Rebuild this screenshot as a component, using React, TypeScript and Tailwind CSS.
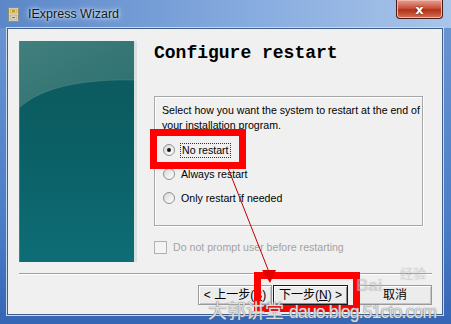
import React from "react";

const ui = { fontFamily: '"Liberation Sans", Arial, sans-serif' };
const cjk = { fontFamily: '"Liberation Sans", "Noto Sans CJK SC", sans-serif' };

function CabinetIcon() {
  return (
    <svg width="11" height="15" viewBox="0 0 11 15">
      <rect x="0.5" y="0.5" width="10" height="14" rx="1" fill="#e9e4cf" stroke="#8d8a78" />
      <rect x="2" y="2" width="7" height="4" fill="#f4d36a" stroke="#b08f2c" strokeWidth="0.6" />
      <rect x="2" y="8" width="7" height="5" fill="#d8d3c0" stroke="#9b9783" strokeWidth="0.6" />
      <rect x="4" y="3.5" width="3" height="1" fill="#7a5e10" />
      <rect x="4" y="10" width="3" height="1" fill="#77735f" />
    </svg>
  );
}

function TealPanel() {
  return (
    <svg width="118" height="221" viewBox="0 0 118 221" className="block">
      <defs>
        <linearGradient id="top" x1="0" y1="0" x2="1" y2="1">
          <stop offset="0" stopColor="#417f7c" />
          <stop offset="1" stopColor="#2b6f70" />
        </linearGradient>
        <linearGradient id="body" x1="0" y1="0" x2="0" y2="1">
          <stop offset="0" stopColor="#0b585d" />
          <stop offset="0.5" stopColor="#0b6065" />
          <stop offset="1" stopColor="#0e6d76" />
        </linearGradient>
      </defs>
      <rect x="0" y="0" width="116" height="221" fill="url(#body)" />
      <path d="M0 0 H116 V39 C70 38 25 44 0 67 Z" fill="url(#top)" />
      <path d="M0 67 C25 44 70 38 116 39" fill="none" stroke="#4f8c89" strokeWidth="0.8" opacity="0.6" />
      <rect x="0" y="0" width="1" height="221" fill="#5c8f8e" opacity="0.6" />
      <rect x="115" y="0" width="3" height="221" fill="#d9e0e0" />
    </svg>
  );
}

function Radio({ checked }: { checked?: boolean }) {
  return (
    <span className="flex h-[12px] w-[12px] items-center justify-center rounded-full border border-[#8f9193] bg-[linear-gradient(135deg,#d8d8d8,#ffffff)]">
      {checked && <span className="h-[4px] w-[4px] rounded-full bg-[#141414]" />}
    </span>
  );
}

function Button({ children, primary }: { children: React.ReactNode; primary?: boolean }) {
  return (
    <div
      className={`flex h-[20px] items-center justify-center bg-[#ececec] text-[12px] text-black ${
        primary
          ? "border border-[#1a1a1a] shadow-[inset_1px_1px_0_#fff,inset_-1px_-1px_0_#8c8c8c]"
          : "border border-[#9a9a9a] shadow-[inset_1px_1px_0_#fff,inset_-1px_-1px_0_#c4c4c4]"
      }`}
      style={cjk}
    >
      {children}
    </div>
  );
}

export default function App() {
  return (
    <div className="relative h-[324px] w-[451px] overflow-hidden bg-[linear-gradient(180deg,#6d97d3,#4a7cc6_70%,#3565b5)]" style={ui}>
      {/* Title bar */}
      <div className="flex h-[28px] items-center bg-[linear-gradient(90deg,#5b87c8,#86abdf_55%,#a9c5e9)] pl-[8px]">
        <CabinetIcon />
        <span
          className="ml-[9px] text-[12.5px] text-[#101820] [text-shadow:0_0_6px_#e6eefa,0_0_3px_#e6eefa]"
          style={ui}
        >
          IExpress Wizard
        </span>
        <div className="ml-auto mr-[8px] flex h-[19px] w-[47px] self-start items-center justify-center rounded-b-[4px] border border-t-0 border-[#4b1a14] bg-[linear-gradient(180deg,#e7a193,#c8523c_45%,#b33016_55%,#d3735a)] shadow-[inset_0_0_0_1px_#f0b8a8]">
          <span className="text-[13px] font-bold leading-none text-white [text-shadow:0_0_2px_#5a1409]" style={{ fontFamily: '"DejaVu Sans", sans-serif' }}>
            x
          </span>
        </div>
      </div>

      {/* Client area */}
      <div className="ml-[7px] mr-[8px] flex h-[287px] flex-col border border-[#3f5f88] bg-[#f0f0f0] shadow-[0_0_0_1px_#c9daf0]">
        <div className="flex pl-[11px] pt-[12px]">
          <TealPanel />
          <div className="ml-[17px] flex w-[269px] flex-col">
            <h1
              className="mt-[1px] text-[18px] font-bold leading-[22px] text-black"
              style={{ fontFamily: '"Liberation Mono", "Courier New", monospace' }}
            >
              Configure restart
            </h1>
            <div className="mt-[32px] h-[130px] border border-[#a6a6a6] pl-[7px] pt-[6px] shadow-[inset_1px_1px_0_#fff,1px_1px_0_#fff]">
              <p className="whitespace-nowrap text-[10.6px] leading-[15px] text-black">
                Select how you want the system to restart at the end of
                <br />
                your installation program.
              </p>
              <div className="mt-[9px] flex flex-col gap-[8px] pl-[1px] text-[10.6px] text-black">
                <div className="flex h-[16px] items-center">
                  <Radio checked />
                  <span className="ml-[5px] border border-dotted border-[#333] px-[1px] leading-[13px]">No restart</span>
                </div>
                <div className="flex h-[16px] items-center">
                  <Radio />
                  <span className="ml-[6px] leading-[13px]">Always restart</span>
                </div>
                <div className="flex h-[16px] items-center">
                  <Radio />
                  <span className="ml-[6px] leading-[13px]">Only restart if needed</span>
                </div>
              </div>
            </div>
            <div className="mt-[14px] flex items-center">
              <span className="h-[13px] w-[13px] border border-[#b1b1b1] bg-[#f4f4f4]" />
              <span className="ml-[6px] text-[10.6px] text-[#a3a3a3]">Do not prompt user before restarting</span>
            </div>
          </div>
        </div>

        {/* Separator */}
        <div className="ml-[11px] mt-[11px] w-[413px] border-t border-b border-t-[#a0a0a0] border-b-white" />

        {/* Buttons */}
        <div className="mt-[10px] flex justify-end pr-[10px]">
          <div className="w-[74px]">
            <Button>
              <span>&lt; 上一步(<span className="underline">B</span>)</span>
            </Button>
          </div>
          <div className="ml-[1px] w-[75px]">
            <Button primary>
              <span>下一步(<span className="underline">N</span>) &gt;</span>
            </Button>
          </div>
          <div className="ml-[10px] w-[74px]">
            <Button>取消</Button>
          </div>
        </div>
      </div>

      {/* Annotation overlays */}
      <div className="pointer-events-none absolute left-[150px] top-[129px] h-[40px] w-[96px] border-[7px] border-[#ff0000]" />
      <div className="pointer-events-none absolute left-[254px] top-[272px] h-[40px] w-[106px] border-[7px] border-[#ff0000]" />
      <svg className="pointer-events-none absolute left-0 top-0" width="451" height="324">
        <line x1="228" y1="168" x2="269" y2="272" stroke="#c00000" strokeWidth="1" />
        <polygon points="262,270 276,270 270,283" fill="#e00000" />
      </svg>

      {/* Watermarks */}
      <div
        className="pointer-events-none absolute left-[356px] top-[276px] text-[17px] font-bold leading-[20px] text-white/30 [text-shadow:0_0_1px_rgba(140,140,140,0.5)]"
        style={cjk}
      >
        Bai
      </div>
      <div
        className="pointer-events-none absolute left-[400px] top-[266px] text-[13px] leading-[16px] text-white/30 [text-shadow:0_0_1px_rgba(140,140,140,0.5)]"
        style={cjk}
      >
        经验
      </div>
      <div
        className="pointer-events-none absolute left-[208px] top-[301px] flex items-baseline whitespace-nowrap leading-[22px] text-white/75 [text-shadow:0_0_1px_#7a7a7a,0_0_1px_#7a7a7a]"
        style={cjk}
      >
        <span className="text-[19px]">大郭讲堂</span>
        <span className="ml-[5px] text-[17.5px] tracking-[-0.8px]">dauo.blog.51cto.com</span>
      </div>
    </div>
  );
}
